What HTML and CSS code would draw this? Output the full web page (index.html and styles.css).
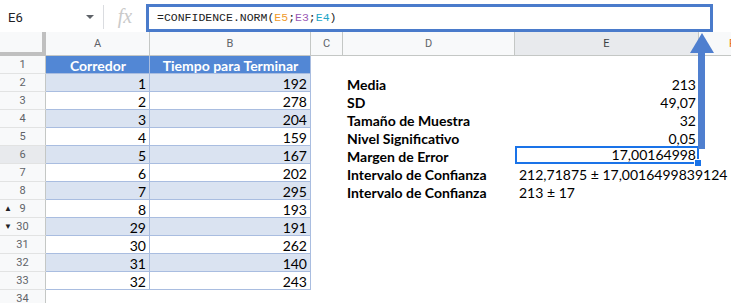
FILE: index.html
```html
<!DOCTYPE html>
<html lang="es">
<head>
    <meta charset="UTF-8">
    <title>Intervalo de Confianza</title>
    <link rel="stylesheet" href="styles.css">
</head>
<body>
    <div class="toolbar">
        <div class="namebox">
            <span>E6</span>
            <span class="caret"></span>
        </div>
        <div class="fx">fx</div>
        <div class="formula">=CONFIDENCE.NORM(<span class="ref-o">E5</span>;<span class="ref-p">E3</span>;<span class="ref-t">E4</span>)</div>
    </div>

    <div class="sheet">
        <!-- column headers -->
        <div class="corner"></div>
        <div class="colhead">A</div>
        <div class="colhead">B</div>
        <div class="colhead">C</div>
        <div class="colhead">D</div>
        <div class="colhead sel">E</div>
        <div class="colhead last"><span class="f-mark">F</span></div>

        <!-- row 1 -->
        <div class="rowhead">1</div>
        <div class="cell th">Corredor</div>
        <div class="cell th">Tiempo para Terminar</div>
        <div class="cell blank"></div><div class="cell blank"></div><div class="cell blank"></div><div class="cell blank"></div>

        <!-- row 2 -->
        <div class="rowhead">2</div>
        <div class="cell td alt">1</div>
        <div class="cell td alt">192</div>
        <div class="cell blank"></div>
        <div class="cell label">Media</div>
        <div class="cell num">213</div>
        <div class="cell blank"></div>

        <div class="rowhead">3</div>
        <div class="cell td">2</div>
        <div class="cell td">278</div>
        <div class="cell blank"></div>
        <div class="cell label">SD</div>
        <div class="cell num">49,07</div>
        <div class="cell blank"></div>

        <div class="rowhead">4</div>
        <div class="cell td alt">3</div>
        <div class="cell td alt">204</div>
        <div class="cell blank"></div>
        <div class="cell label">Tamaño de Muestra</div>
        <div class="cell num">32</div>
        <div class="cell blank"></div>

        <div class="rowhead">5</div>
        <div class="cell td">4</div>
        <div class="cell td">159</div>
        <div class="cell blank"></div>
        <div class="cell label">Nivel Significativo</div>
        <div class="cell num">0,05</div>
        <div class="cell blank"></div>

        <div class="rowhead sel">6</div>
        <div class="cell td alt">5</div>
        <div class="cell td alt">167</div>
        <div class="cell blank"></div>
        <div class="cell label">Margen de Error</div>
        <div class="cell num active">17,00164998<span class="handle"></span></div>
        <div class="cell blank"></div>

        <div class="rowhead">7</div>
        <div class="cell td">6</div>
        <div class="cell td">202</div>
        <div class="cell blank"></div>
        <div class="cell label">Intervalo de Confianza</div>
        <div class="cell text">212,71875 ± 17,0016499839124</div>
        <div class="cell blank"></div>

        <div class="rowhead">8</div>
        <div class="cell td alt">7</div>
        <div class="cell td alt">295</div>
        <div class="cell blank"></div>
        <div class="cell label">Intervalo de Confianza</div>
        <div class="cell text">213 ± 17</div>
        <div class="cell blank"></div>

        <div class="rowhead"><span class="tri">&#9650;</span>9</div>
        <div class="cell td">8</div>
        <div class="cell td">193</div>
        <div class="cell blank"></div><div class="cell blank"></div><div class="cell blank"></div><div class="cell blank"></div>

        <div class="rowhead"><span class="tri">&#9660;</span>30</div>
        <div class="cell td alt">29</div>
        <div class="cell td alt">191</div>
        <div class="cell blank"></div><div class="cell blank"></div><div class="cell blank"></div><div class="cell blank"></div>

        <div class="rowhead">31</div>
        <div class="cell td">30</div>
        <div class="cell td">262</div>
        <div class="cell blank"></div><div class="cell blank"></div><div class="cell blank"></div><div class="cell blank"></div>

        <div class="rowhead">32</div>
        <div class="cell td alt">31</div>
        <div class="cell td alt">140</div>
        <div class="cell blank"></div><div class="cell blank"></div><div class="cell blank"></div><div class="cell blank"></div>

        <div class="rowhead">33</div>
        <div class="cell td">32</div>
        <div class="cell td">243</div>
        <div class="cell blank"></div><div class="cell blank"></div><div class="cell blank"></div><div class="cell blank"></div>

        <div class="rowhead">34</div>
        <div class="cell blank"></div><div class="cell blank"></div><div class="cell blank"></div><div class="cell blank"></div><div class="cell blank"></div><div class="cell blank"></div>
    </div>

    <!-- annotation arrow from E6 to the formula bar -->
    <svg class="arrow" width="731" height="303" viewBox="0 0 731 303">
        <polygon points="702,33 690,53 714,53" fill="#4f7fcf"/>
        <rect x="698" y="50" width="7" height="99" fill="#4f7fcf"/>
    </svg>
</body>
</html>
```

FILE: styles.css
```css
body {
    margin: 0;
    width: 731px;
    height: 303px;
    overflow: hidden;
    background: #fff;
    font-family: Roboto, Arial, sans-serif;
    position: relative;
}

.toolbar {
    display: flex;
    height: 32px;
    background: #fff;
}
.namebox {
    width: 104px;
    display: flex;
    align-items: center;
    justify-content: space-between;
    padding: 0 8px 0 8px;
    box-sizing: border-box;
    border-right: 1px solid #dadce0;
    margin: 5px 0 3px 0;
    font-size: 13px;
    color: #202124;
}
.caret {
    width: 0;
    height: 0;
    border-left: 4px solid transparent;
    border-right: 4px solid transparent;
    border-top: 4px solid #5f6368;
    margin-right: 1px;
}
.fx {
    width: 42px;
    text-align: center;
    font-family: "Liberation Serif", serif;
    font-style: italic;
    font-size: 20px;
    color: #cacaca;
    line-height: 32px;
}
.formula {
    flex: 1;
    margin: 4px 18px 0 0;
    height: 28px;
    box-sizing: border-box;
    border: 3px solid #4a7bcb;
    padding-left: 8px;
    font-family: "Liberation Mono", monospace;
    font-size: 11.5px;
    line-height: 22px;
    color: #222;
}
.ref-o { color: #f09b2c; }
.ref-p { color: #9b59b6; }
.ref-t { color: #22a6c8; }

.sheet {
    display: grid;
    grid-template-columns: 46px 104px 161px 32px 172px 184px 32px;
    grid-template-rows: 24px;
    grid-auto-rows: 18px;
}

.corner {
    background: #f8f9fa;
    border-right: 4px solid #c0c0c0;
    border-bottom: 4px solid #c0c0c0;
    box-sizing: border-box;
}
.colhead {
    background: #f8f9fa;
    border-right: 1px solid #c4c7c5;
    border-bottom: 1px solid #c4c7c5;
    box-sizing: border-box;
    display: flex;
    align-items: center;
    justify-content: center;
    font-size: 11px;
    color: #5f6368;
}
.colhead.sel {
    background: #e8eaed;
    color: #3c4043;
}
.colhead.last {
    border-right: none;
    justify-content: flex-end;
    overflow: hidden;
}
.f-mark {
    color: #e8710a;
    margin-right: -4px;
}

.rowhead {
    background: #f8f9fa;
    border-right: 1px solid #c4c7c5;
    border-bottom: 1px solid #e2e3e3;
    box-sizing: border-box;
    display: flex;
    align-items: center;
    justify-content: center;
    font-size: 11px;
    color: #5f6368;
    position: relative;
}
.rowhead.sel {
    background: #e8eaed;
}
.tri {
    position: absolute;
    left: 4px;
    top: 4px;
    font-size: 8px;
    color: #202124;
}

.cell {
    box-sizing: border-box;
    display: flex;
    align-items: flex-end;
    padding: 0 3px 0 4px;
    font-family: Lato, "Open Sans", sans-serif;
    font-size: 14px;
    line-height: 15px;
    color: #000;
    white-space: nowrap;
}
.th {
    background: #5287d5;
    color: #fff;
    font-weight: bold;
    justify-content: center;
    border-right: 1px solid #a9bde0;
    border-bottom: 1px solid #a9bde0;
}
.td {
    justify-content: flex-end;
    border-right: 1px solid #a9bde0;
    border-bottom: 1px solid #a9bde0;
}
.td.alt {
    background: #dae3f1;
}
.label {
    font-weight: bold;
}
.num {
    justify-content: flex-end;
}
.text {
    overflow: visible;
}
.active {
    position: relative;
    border: 2px solid #1a73e8;
    padding-right: 1px;
}
.handle {
    position: absolute;
    right: -5px;
    bottom: -5px;
    width: 6px;
    height: 6px;
    background: #1a73e8;
    border: 1px solid #fff;
}

.arrow {
    position: absolute;
    left: 0;
    top: 0;
    pointer-events: none;
}
```
